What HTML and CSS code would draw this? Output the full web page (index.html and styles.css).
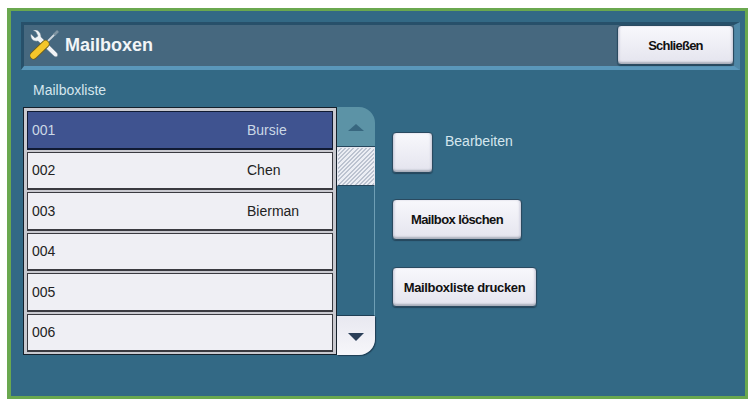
FILE: index.html
```html
<!DOCTYPE html>
<html lang="de">
<head>
    <meta charset="UTF-8">
    <title>Mailboxen</title>
    <link rel="stylesheet" href="styles.css">
</head>
<body>
    <div class="screen">
        <div class="header">
            <div class="title">
                <svg class="tools" width="30" height="30" viewBox="0 0 30 30">
                    <line x1="15" y1="14" x2="25" y2="4" stroke="#cfd8de" stroke-width="1.8"/>
                    <line x1="24" y1="5" x2="28" y2="1" stroke="#7f95a3" stroke-width="2.6"/>
                    <path d="M1 4 L5 8 L8 6 L6 2 L3 0 C7 -1 11 2 11 7 L27 23 C29 26 26 28 24 26 L8 11 C3 12 0 8 1 4 Z" fill="#f1f3f5" stroke="#6f8492" stroke-width="0.5"/>
                    <line x1="3.5" y1="25.5" x2="15.5" y2="14" stroke="#6b5f22" stroke-width="8" stroke-linecap="round"/>
                    <line x1="3.5" y1="25.5" x2="15.5" y2="14" stroke="#f4c62a" stroke-width="6.4" stroke-linecap="round"/>
                </svg>
                <span>Mailboxen</span>
            </div>
            <button class="btn close">Schließen</button>
        </div>

        <div class="list-label">Mailboxliste</div>

        <div class="content">
            <div class="list">
                <div class="row selected"><span class="num">001</span><span>Bursie</span></div>
                <div class="row"><span class="num">002</span><span>Chen</span></div>
                <div class="row"><span class="num">003</span><span>Bierman</span></div>
                <div class="row"><span class="num">004</span></div>
                <div class="row"><span class="num">005</span></div>
                <div class="row"><span class="num">006</span></div>
            </div>

            <div class="scrollbar">
                <div class="scroll-up"><span class="arrow-up"></span></div>
                <div class="scroll-thumb"></div>
                <div class="scroll-track"></div>
                <div class="scroll-down"><span class="arrow-down"></span></div>
            </div>

            <div class="actions">
                <div class="check-row">
                    <button class="btn check"></button>
                    <span class="check-label">Bearbeiten</span>
                </div>
                <button class="btn delete">Mailbox löschen</button>
                <button class="btn print">Mailboxliste drucken</button>
            </div>
        </div>
    </div>
</body>
</html>
```

FILE: styles.css
```css
* {
    box-sizing: border-box;
}
body {
    margin: 0;
    padding: 8px 0 2px 7px;
    height: 401px;
    background: #fff;
    font-family: "Liberation Sans", Arial, sans-serif;
    overflow: hidden;
}
.screen {
    width: 741px;
    height: 391px;
    padding: 11px 5px 0 10px;
    background: #336985;
    border: solid #6aa84f;
    border-width: 3px 3px 3px 4px;
}
.header {
    display: flex;
    justify-content: space-between;
    align-items: center;
    width: 719px;
    height: 48px;
    padding: 0 0 1px 6px;
    background: #46687f;
    border-top: 3px solid #27506a;
    border-left: 3px solid #27506a;
    border-bottom: 4px solid #5a97ba;
    border-right: 6px solid #4f87a6;
}
.title {
    display: flex;
    align-items: center;
    gap: 5px;
    color: #f2f5f7;
    font-size: 18px;
    font-weight: bold;
}
.btn {
    display: block;
    padding: 0;
    border: 1px solid #2a4a60;
    border-radius: 4px;
    background: linear-gradient(#f8f8fc, #e4e4ee);
    box-shadow: inset 0 -2px 2px #a9aebb, inset 2px 0 2px #dcdce8, inset -2px 0 2px #dcdce8, 0 1px 1px #24465c;
    color: #111;
    font-family: inherit;
    font-size: 13px;
    font-weight: bold;
}
.close {
    width: 117px;
    height: 40px;
    letter-spacing: -0.75px;
}
.list-label {
    margin: 13px 0 0 12px;
    height: 15px;
    color: #d5e6ee;
    font-size: 14px;
    line-height: 15px;
}
.content {
    display: flex;
    margin: 9px 0 0 2px;
}
.list {
    display: flex;
    flex-direction: column;
    gap: 2px;
    width: 314px;
    height: 248px;
    padding: 3px 3px 2px;
    background: #c9c9cf;
    border: 1px solid #15202b;
}
.row {
    display: flex;
    align-items: center;
    height: 39px;
    padding-left: 4px;
    background: #efeff4;
    border: 1px solid #3a3a40;
    border-bottom-width: 2px;
    color: #222;
    font-size: 14px;
}
.num {
    width: 215px;
}
.row.selected {
    background: #3f5390;
    border-color: #101a33;
    color: #cbd8e6;
}
.scrollbar {
    display: flex;
    flex-direction: column;
    width: 38px;
    height: 248px;
}
.scroll-up {
    display: flex;
    justify-content: center;
    height: 40px;
    padding-top: 17px;
    background: #5c93a6;
    border-radius: 0 16px 0 0;
    border-bottom: 1px solid #24465c;
}
.arrow-up {
    width: 0;
    height: 0;
    border: 8px solid transparent;
    border-top: 0;
    border-bottom: 7px solid #38677f;
}
.scroll-thumb {
    height: 39px;
    border: 1px solid #e4e6ee;
    border-bottom: 1px solid #24465c;
    background: repeating-linear-gradient(135deg, #eceef4 0 1.5px, #bcc3d0 1.5px 3px);
}
.scroll-track {
    flex: 1;
    background: #336985;
    border-right: 1px solid #6f9fb5;
    border-bottom: 1px solid #1e3e54;
}
.scroll-down {
    display: flex;
    justify-content: center;
    height: 39px;
    padding-top: 17px;
    background: linear-gradient(#e8e8f0, #f6f6fa);
    border-radius: 0 0 16px 0;
    box-shadow: 1px 1px 1px #1e3e54;
}
.arrow-down {
    width: 0;
    height: 0;
    border: 8px solid transparent;
    border-bottom: 0;
    border-top: 8px solid #2b3f58;
}
.actions {
    display: flex;
    flex-direction: column;
    align-items: flex-start;
    margin: 25px 0 0 17px;
}
.check-row {
    display: flex;
    gap: 12px;
}
.check {
    width: 41px;
    height: 41px;
}
.check-label {
    margin-top: 2px;
    color: #d5e6ee;
    font-size: 14px;
    line-height: 15px;
}
.delete {
    width: 130px;
    height: 41px;
    margin-top: 26px;
    letter-spacing: -0.6px;
}
.print {
    width: 145px;
    height: 40px;
    margin-top: 27px;
    letter-spacing: -0.35px;
}
```
